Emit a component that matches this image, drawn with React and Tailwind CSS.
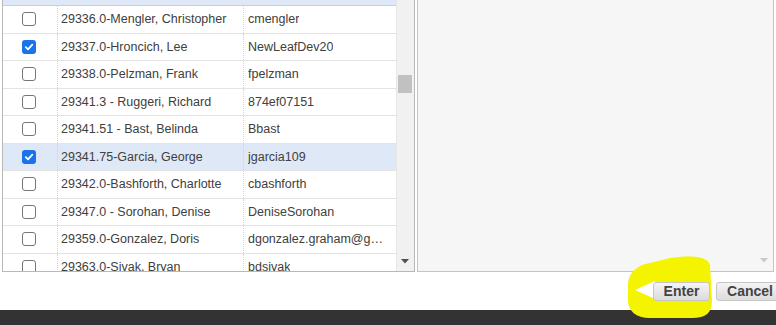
import React from "react";

const rows = [
  { name: "29336.0-Mengler, Christopher", login: "cmengler" },
  { name: "29337.0-Hroncich, Lee", login: "NewLeafDev20", checked: true },
  { name: "29338.0-Pelzman, Frank", login: "fpelzman" },
  { name: "29341.3 - Ruggeri, Richard", login: "874ef07151" },
  { name: "29341.51 - Bast, Belinda", login: "Bbast" },
  { name: "29341.75-Garcia, George", login: "jgarcia109", checked: true, selected: true },
  { name: "29342.0-Bashforth, Charlotte", login: "cbashforth" },
  { name: "29347.0 - Sorohan, Denise", login: "DeniseSorohan" },
  { name: "29359.0-Gonzalez, Doris", login: "dgonzalez.graham@gmail.com" },
  { name: "29363.0-Sivak, Bryan", login: "bdsivak" },
];

function Check({ checked }) {
  if (checked) {
    return (
      <span className="w-[14px] h-[14px] rounded-[3px] bg-[#1a73e8] flex items-center justify-center">
        <svg width="10" height="10" viewBox="0 0 10 10">
          <path d="M1.8 5.2 L4 7.3 L8.3 2.6" fill="none" stroke="white" strokeWidth="1.8" strokeLinecap="round" strokeLinejoin="round" />
        </svg>
      </span>
    );
  }
  return <span className="w-[14px] h-[14px] rounded-[3px] border border-[#767676] bg-white" />;
}

export default function App() {
  return (
    <div className="w-[776px] h-[325px] bg-white relative overflow-hidden font-['Liberation_Sans',Arial,sans-serif]">
      <div className="flex h-[272px]">
        <div className="ml-[2px] w-[413px] h-full border-l border-r border-b border-[#b8b8b8] flex">
          <div className="w-[393px] flex flex-col overflow-hidden">
            <div className="h-[6px] shrink-0 bg-[#dfe8f6] border-b border-[#d0d0d0]" />
            <div className="flex flex-col">
              {rows.map((r, i) => (
                <div
                  key={i}
                  className={`h-[27.5px] shrink-0 flex border-b border-[#e3e3e3] text-[12.5px] text-[#404040] ${r.selected ? "bg-[#dfe8f6]" : "bg-white"}`}
                >
                  <div className="w-[55px] shrink-0 flex items-center justify-center pr-[3px] border-r border-dotted border-[#d3d3d3]">
                    <Check checked={r.checked} />
                  </div>
                  <div className="w-[186px] shrink-0 flex items-center pl-[3px] pt-[1px] border-r border-dotted border-[#d3d3d3] whitespace-nowrap overflow-hidden">
                    {r.name}
                  </div>
                  <div className="w-[152px] shrink-0 flex items-center pl-[4px] pr-[8px] pt-[1px] whitespace-nowrap overflow-hidden">
                    <span className="truncate">{r.login}</span>
                  </div>
                </div>
              ))}
            </div>
          </div>
          <div className="w-[18px] bg-[#f1f1f1] border-l border-[#e6e6e6] relative">
            <div className="absolute left-[1px] top-[75px] w-[14px] h-[18px] bg-[#c1c1c1]" />
            <svg className="absolute left-[4px] top-[259px]" width="8" height="5" viewBox="0 0 8 5">
              <path d="M0 0 L8 0 L4 4.5 Z" fill="#505050" />
            </svg>
          </div>
        </div>
        <div className="ml-[2px] w-[357px] h-full border-l border-r border-b border-[#c4c4c4] bg-[#f6f6f6] relative">
          <svg className="absolute right-[5px] bottom-[8px]" width="8" height="5" viewBox="0 0 8 5">
            <path d="M0 0 L8 0 L4 4.5 Z" fill="#c8c8c8" />
          </svg>
        </div>
      </div>
      <div className="h-[38px] relative">
        <svg className="absolute left-[620px] top-[-17px] z-10" width="100" height="70" viewBox="0 0 100 70">
          <path
            d="M8,30 C8,18 17,10 30,8 L50,3 C70,0 88,1 90,10 L92,45 C92,58 86,63 72,63 L30,63 C16,63 8,56 8,45 Z"
            fill="#f4f400"
          />
          <path d="M15,35 L35,26 L35,44 Z" fill="#ffffff" />
        </svg>
        <div className="absolute left-[653px] top-[10px] flex gap-[6px] z-20">
          <div className="h-[19px] w-[57px] rounded-[3px] border border-[#c6c6c6] bg-gradient-to-b from-[#f4f4f4] to-[#dcdcdc] flex items-center justify-center text-[14px] font-bold text-[#444444]">
            Enter
          </div>
          <div className="h-[19px] w-[68px] rounded-[3px] border border-[#c6c6c6] bg-gradient-to-b from-[#f4f4f4] to-[#dcdcdc] flex items-center justify-center text-[14px] font-bold text-[#444444]">
            Cancel
          </div>
        </div>
      </div>
      <div className="h-[15px] bg-[#333333]" />
    </div>
  );
}
